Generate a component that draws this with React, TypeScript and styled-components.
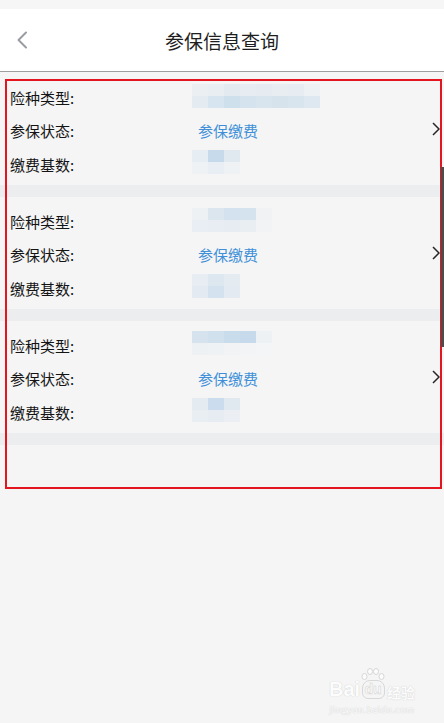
import React from "react";
import styled, { createGlobalStyle } from "styled-components";

const GlobalStyle = createGlobalStyle`
  html, body { margin: 0; padding: 0; background: #f5f5f5; }
  body { font-family: "Noto Sans CJK SC", "Noto Sans", sans-serif; }
`;

const Page = styled.div`
  position: relative;
  width: 444px;
  height: 723px;
  overflow: hidden;
  background: #f5f5f5;
`;

const StatusBar = styled.div`
  height: 9px;
  background: #f6f6f6;
`;

const Header = styled.header`
  height: 62px;
  background: #ffffff;
  border-bottom: 1px solid #9e9e9e;
  display: grid;
  grid-template-columns: 60px 1fr 60px;
  align-items: center;
`;

const BackButton = styled.button`
  border: none;
  background: transparent;
  padding: 0 0 0 16px;
  height: 100%;
  display: flex;
  align-items: center;
  cursor: pointer;
`;

const Title = styled.h1`
  margin: 0;
  text-align: center;
  font-size: 19px;
  font-weight: 400;
  color: #1e1e1e;
  letter-spacing: 0;
`;

const List = styled.div`
  display: flex;
  flex-direction: column;
  padding-top: 1px;
`;

const Group = styled.section`
  display: flex;
  align-items: center;
  padding: 8px 0 4px;
`;

const Rows = styled.div`
  flex: 1;
  display: flex;
  flex-direction: column;
`;

const Row = styled.div`
  height: 33.3px;
  display: grid;
  grid-template-columns: 182px 1fr;
  align-items: center;
  padding-left: 10px;
`;

const Label = styled.span`
  font-size: 15px;
  color: #141414;
  line-height: 1;
`;

const Status = styled.span`
  font-size: 15px;
  color: #3f90d8;
  padding-left: 6px;
  line-height: 1;
`;

const Chevron = styled.div`
  width: 8px;
  padding-right: 4px;
  display: flex;
  align-items: center;
  margin-top: -4px;
`;

const Band = styled.div`
  height: 12px;
  background: #ecedef;
`;

const Pixels = styled.div<{ $cols: number }>`
  display: grid;
  grid-template-columns: repeat(${(p) => p.$cols}, 16px);
  grid-auto-rows: 12px;
  width: max-content;
  margin-top: -4px;
`;

const Cell = styled.div<{ $c: string }>`
  background: ${(p) => p.$c};
`;

const Highlight = styled.div`
  position: absolute;
  left: 5px;
  top: 79px;
  width: 433px;
  height: 406px;
  border: 2px solid #e3151f;
  pointer-events: none;
`;

const ScrollThumb = styled.div`
  position: absolute;
  right: 0;
  top: 167px;
  width: 3px;
  height: 180px;
  background: #4d4d4d;
`;

const Watermark = styled.div`
  position: absolute;
  left: 326px;
  top: 668px;
  width: 92px;
  display: flex;
  flex-direction: column;
  align-items: center;
  color: #fcfcfc;
  white-space: nowrap;
  pointer-events: none;
`;

const MarkLine = styled.div`
  display: flex;
  align-items: flex-end;
  font-family: "Liberation Sans", Arial, sans-serif;
  font-weight: 700;
  font-size: 20px;
  line-height: 1;
  text-shadow: 0 0 1px #d4d4d4, 0 0 1px #d4d4d4;
`;

const PawBox = styled.span`
  display: flex;
  flex-direction: column;
  align-items: center;
  margin: 0 1px;
`;

const PawPad = styled.span`
  font-size: 14px;
  line-height: 1;
  padding: 1px 2px 2px;
  border: 1px solid #d8d8d8;
  border-radius: 8px 8px 6px 6px;
  text-shadow: none;
  color: #fcfcfc;
  -webkit-text-stroke: 0.5px #d0d0d0;
`;

const MarkCjk = styled.span`
  font-family: "Noto Sans CJK SC", sans-serif;
  font-size: 14px;
  margin-left: 1px;
`;

const MarkUrl = styled.div`
  margin-top: 4px;
  font-family: "Liberation Serif", serif;
  font-size: 11px;
  letter-spacing: 0.2px;
  text-shadow: 0 0 1px #d2d2d2, 0 0 1px #d2d2d2;
`;

type Blob = string[][];

const blobs: { type: Blob; base: Blob }[] = [
  {
    type: [
      ["#eceff2", "#e9eef2", "#e3eaf0", "#e6ecf1", "#e5ebf0", "#e8edf1", "#e6ecf1", "#eef1f3"],
      ["#e4ecf2", "#d7e5f0", "#cfe0ed", "#d5e3ee", "#d9e5ee", "#d6e3ed", "#d8e4ee", "#dde8f0"],
    ],
    base: [
      ["#e6edf3", "#c6daeb", "#e1e9f0"],
      ["#eef2f5", "#e8eef3", "#eef2f5"],
    ],
  },
  {
    type: [
      ["#eef1f4", "#dbe6ef", "#d3e2ee", "#d4e3ee", "#f0f2f4"],
      ["#e8eef3", "#e7edf2", "#e6ecf2", "#e9eef3", "#f1f3f5"],
    ],
    base: [
      ["#e7edf3", "#dde7f0", "#e4ebf1"],
      ["#e3eaf1", "#d3e2ee", "#e3eaf1"],
    ],
  },
  {
    type: [
      ["#d6e3ee", "#d0e0ed", "#c9dcec", "#c6daeb", "#eef1f4"],
      ["#eef1f4", "#eff2f4", "#f1f3f5", "#f2f4f5", "#f4f5f6"],
    ],
    base: [
      ["#e4ebf1", "#cadced", "#e1e9f0"],
      ["#e9eef3", "#e6ecf2", "#ebeff3"],
    ],
  },
];

const BlurValue: React.FC<{ data: Blob }> = ({ data }) => (
  <Pixels $cols={data[0].length}>
    {data.flat().map((c, i) => (
      <Cell key={i} $c={c} />
    ))}
  </Pixels>
);

const LeftArrow = () => (
  <svg width="12" height="18" viewBox="0 0 12 18" fill="none">
    <path d="M10 1.5 L2.5 9 L10 16.5" stroke="#9a9ca3" strokeWidth="2" strokeLinecap="round" strokeLinejoin="round" />
  </svg>
);

const RightArrow = () => (
  <svg width="8" height="14" viewBox="0 0 8 14" fill="none">
    <path d="M1 1 L7 7 L1 13" stroke="#262626" strokeWidth="1.5" strokeLinejoin="miter" />
  </svg>
);

const Toes = () => (
  <svg width="24" height="12" viewBox="0 0 24 12">
    <g fill="#fcfcfc" stroke="#d6d6d6" strokeWidth="1">
      <ellipse cx="3.5" cy="8.5" rx="2.5" ry="3" />
      <ellipse cx="9" cy="3.5" rx="2.5" ry="3" />
      <ellipse cx="15" cy="3.5" rx="2.5" ry="3" />
      <ellipse cx="20.5" cy="8.5" rx="2.5" ry="3" />
    </g>
  </svg>
);

export default function App() {
  return (
    <Page>
      <GlobalStyle />
      <StatusBar />
      <Header>
        <BackButton aria-label="返回">
          <LeftArrow />
        </BackButton>
        <Title>参保信息查询</Title>
        <div />
      </Header>
      <List>
        {blobs.map((b, i) => (
          <React.Fragment key={i}>
            <Group>
              <Rows>
                <Row>
                  <Label>险种类型:</Label>
                  <BlurValue data={b.type} />
                </Row>
                <Row>
                  <Label>参保状态:</Label>
                  <Status>参保缴费</Status>
                </Row>
                <Row>
                  <Label>缴费基数:</Label>
                  <BlurValue data={b.base} />
                </Row>
              </Rows>
              <Chevron>
                <RightArrow />
              </Chevron>
            </Group>
            <Band />
          </React.Fragment>
        ))}
      </List>
      <Highlight />
      <ScrollThumb />
      <Watermark>
        <MarkLine>
          Bai
          <PawBox>
            <Toes />
            <PawPad>du</PawPad>
          </PawBox>
          <MarkCjk>经验</MarkCjk>
        </MarkLine>
        <MarkUrl>jingyan.baidu.com</MarkUrl>
      </Watermark>
    </Page>
  );
}
